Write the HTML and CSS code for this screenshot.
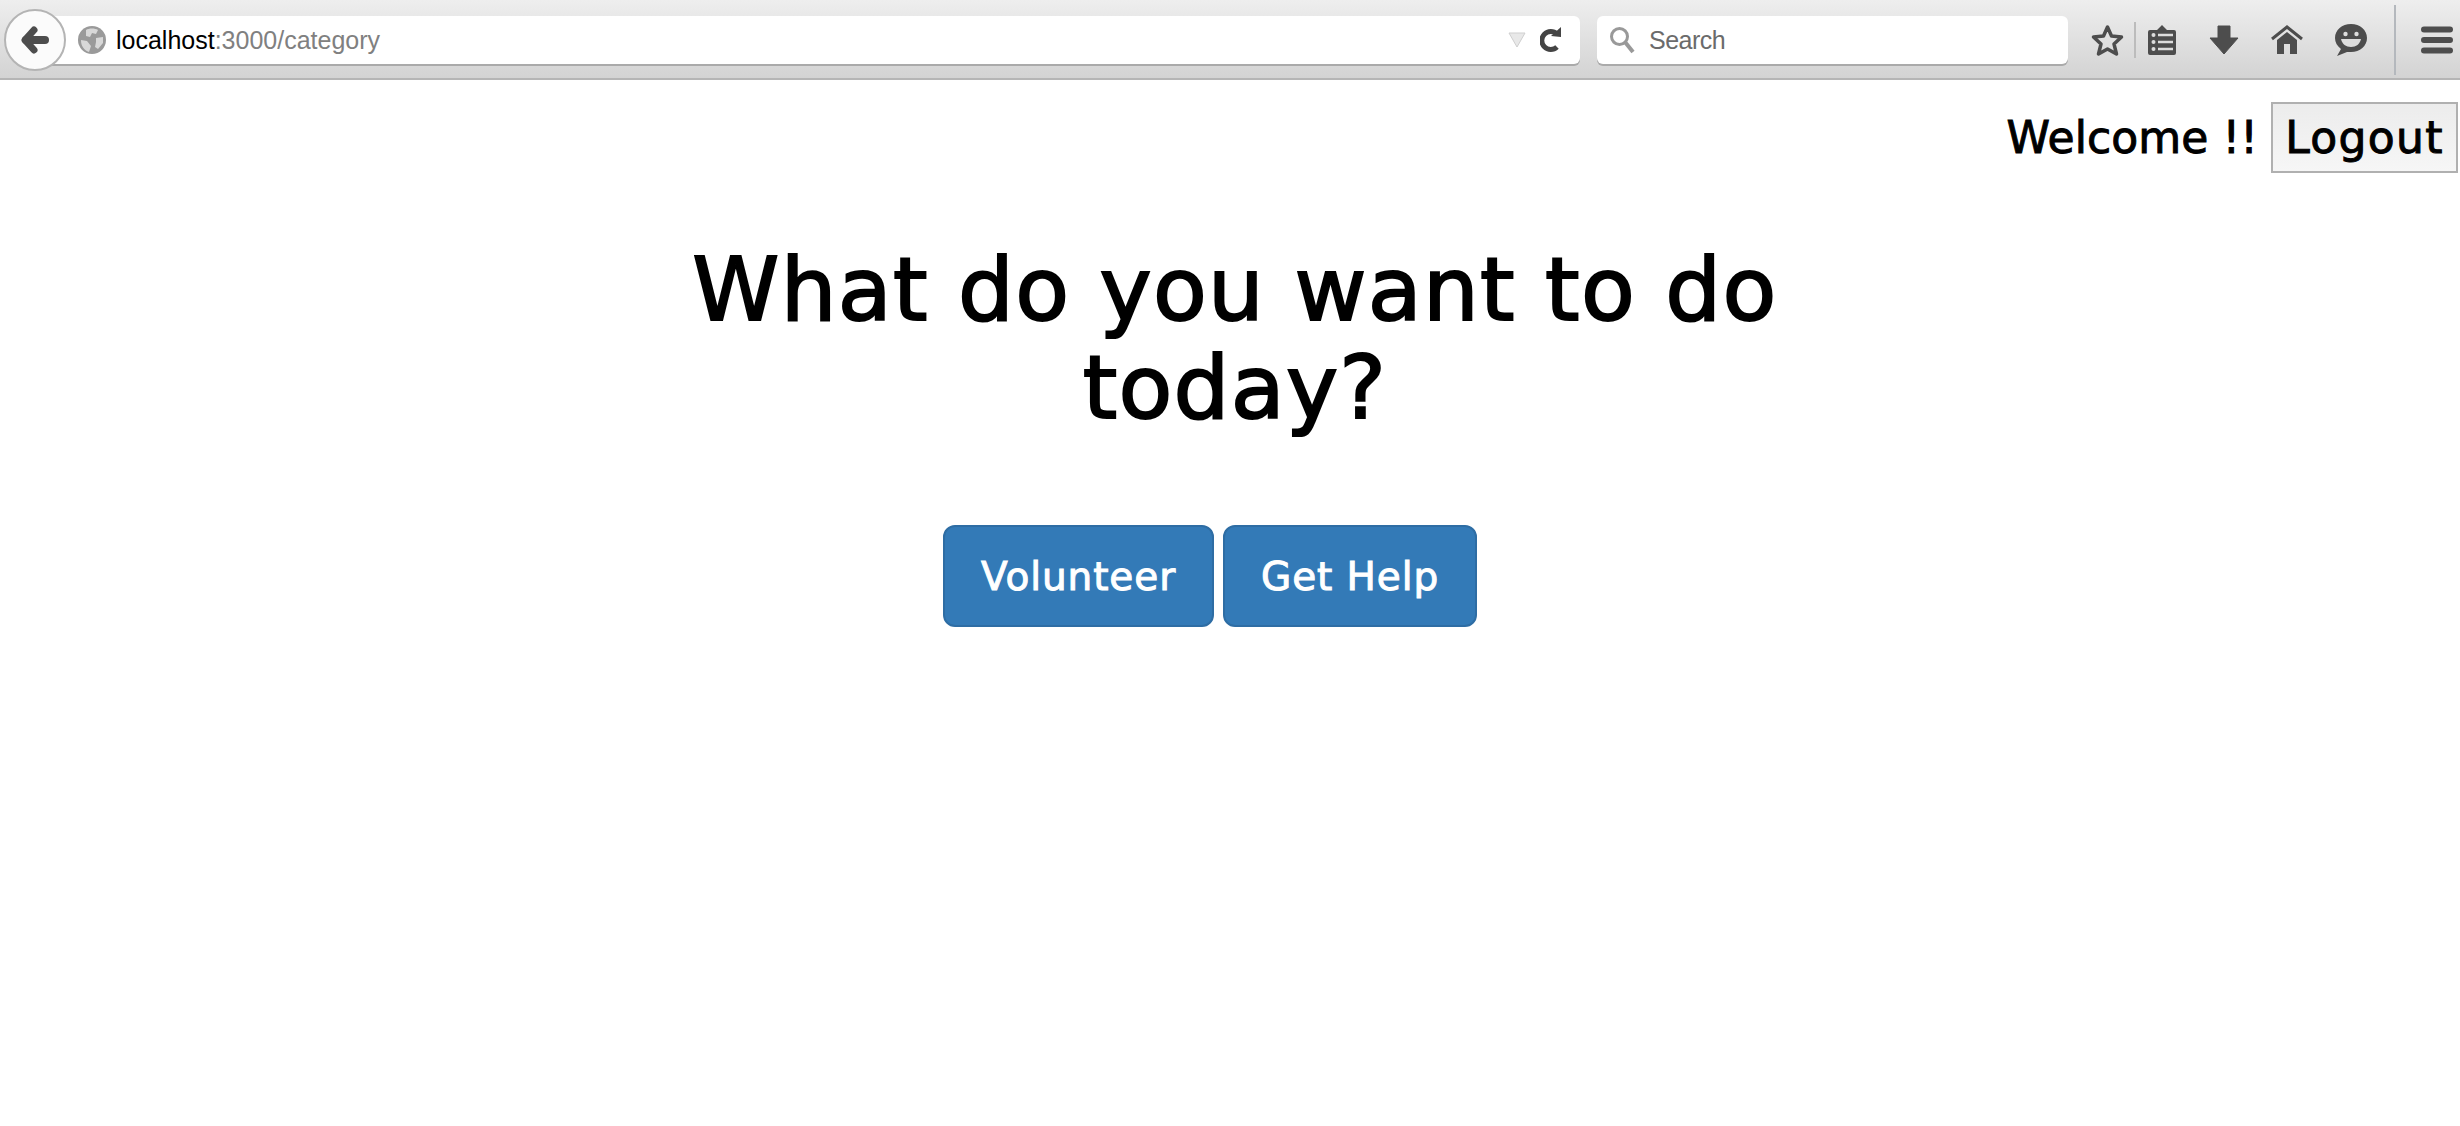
FILE: index.html
```html
<!DOCTYPE html>
<html lang="en">
<head>
<meta charset="utf-8">
<title>localhost:3000/category</title>
<link rel="stylesheet" href="styles.css">
</head>
<body>
<div class="toolbar">
  <button class="back" aria-label="Back">
    <svg width="30" height="30" viewBox="0 0 30 30"><path d="M14 5 L5 15 L14 25" fill="none" stroke="#4d4d4d" stroke-width="7" stroke-linecap="round" stroke-linejoin="round"/><path d="M6 15 H25" stroke="#4d4d4d" stroke-width="8" stroke-linecap="round"/></svg>
  </button>
  <div class="urlbar">
    <svg class="globe" width="28" height="28" viewBox="0 0 28 28"><circle cx="14" cy="14" r="14" fill="#9a9a9a"/><path d="M8 4 C11 2 17 2 20 4 L18 8 L14 7 L12 11 L8 10 Z M18 12 L25 11 L25 17 L20 23 L17 21 L18 16 Z M3 14 L9 15 L13 20 L11 26 C6 24 3 20 3 14 Z" fill="#d8d8d8"/></svg>
    <span class="url"><span class="url-host">localhost</span>:3000/category</span>
    <svg class="dropmark" width="18" height="16" viewBox="0 0 18 16"><path d="M1 1 H17 L9 15 Z" fill="#e8e8e8" stroke="#cfcfcf" stroke-width="1"/></svg>
    <svg class="reload" width="22" height="26" viewBox="0 0 22 26"><path d="M17 7 A9 9 0 1 0 17 20" fill="none" stroke="#444" stroke-width="5"/><path d="M11 9 L21 0 V10 Z" fill="#444"/></svg>
  </div>
  <div class="searchbar">
    <svg width="26" height="28" viewBox="0 0 26 28"><circle cx="10.500" cy="10.500" r="8" fill="none" stroke="#999" stroke-width="3"/><path d="M16 16 L24 26" stroke="#999" stroke-width="4"/></svg>
    <span class="search-label">Search</span>
  </div>
  <div class="tools">
    <svg class="tool star" width="33" height="33" viewBox="0 0 33 33"><path d="M16.500 3 L20.500 12 L30.500 13 L23 20 L25.500 30 L16.500 25 L7.500 30 L10 20 L2.500 13 L12.500 12 Z" fill="none" stroke="#4d4d4d" stroke-width="3.500" stroke-linejoin="round"/></svg>
    <span class="sep"></span>
    <svg class="tool list" width="30" height="32" viewBox="0 0 30 32"><path d="M3 6 H10 L15 1 L20 6 H27 Q29 6 29 8 V29 Q29 31 27 31 H3 Q1 31 1 29 V8 Q1 6 3 6 Z" fill="#4d4d4d"/><path d="M11 11 H26 M11 18 H26 M11 25 H26" stroke="#ddd" stroke-width="2.500"/><circle cx="6.500" cy="11" r="2" fill="#ddd"/><circle cx="6.500" cy="18" r="2" fill="#ddd"/><circle cx="6.500" cy="25" r="2" fill="#ddd"/></svg>
    <svg class="tool down" width="30" height="30" viewBox="0 0 30 30"><path d="M9 1 H21 V13 H29 L15 29 L1 13 H9 Z" fill="#4d4d4d" stroke="#4d4d4d" stroke-linejoin="round"/></svg>
    <svg class="tool home" width="32" height="30" viewBox="0 0 32 30"><path d="M1 14 L16 2 L31 14" fill="none" stroke="#4d4d4d" stroke-width="3"/><path d="M6 15 L16 7 L26 15 V29 H19 V19 H13 V29 H6 Z" fill="#4d4d4d"/></svg>
    <svg class="tool hello" width="34" height="34" viewBox="0 0 34 34"><path d="M17 1 C26 1 33 7 33 15 C33 23 26 29 17 29 C15 29 14 29 13 29 L3 33 L7 26 C3 23 1 19 1 15 C1 7 8 1 17 1 Z" fill="#4d4d4d"/><circle cx="11.500" cy="11" r="2.200" fill="#ddd"/><circle cx="22.500" cy="11" r="2.200" fill="#ddd"/><path d="M7 16 H27 C26 21 22 24 17 24 C12 24 8 21 7 16 Z" fill="#ddd"/></svg>
    <span class="sep sep-tall"></span>
    <svg class="tool menu" width="32" height="28" viewBox="0 0 32 28"><path d="M3 3.500 H29 M3 14 H29 M3 24.500 H29" stroke="#4d4d4d" stroke-width="6" stroke-linecap="round"/></svg>
  </div>
</div>
<div class="userbar">
  <span class="welcome">Welcome !!</span>
  <button class="logout">Logout</button>
</div>
<h1 class="title">What do you want to do<br>today?</h1>
<div class="actions">
  <button class="primary">Volunteer</button>
  <button class="primary">Get Help</button>
</div>
</body>
</html>
```
FILE: styles.css
```css
* { box-sizing: border-box; }
html, body { margin: 0; height: 100%; background: #fff; overflow: hidden; }
body { font-family: "DejaVu Sans", sans-serif; color: #000; }

.toolbar {
  display: flex;
  align-items: center;
  height: 80px;
  padding: 2px 0 0 4px;
  background: linear-gradient(#eeeeee, #d3d3d3);
  border-bottom: 2px solid #b5b5b5;
}
.back {
  position: relative;
  z-index: 1;
  flex: none;
  display: flex;
  align-items: center;
  justify-content: center;
  width: 62px;
  height: 62px;
  padding: 0;
  border: 2px solid #b4b4b4;
  border-radius: 50%;
  background: #fbfbfb;
}
.urlbar, .searchbar {
  display: flex;
  align-items: center;
  height: 48px;
  background: #fff;
  border-radius: 0 6px 6px 0;
  box-shadow: 0 2px 0 #aaa;
  font-family: "Liberation Sans", Arial, sans-serif;
  font-size: 25px;
}
.urlbar {
  width: 1530px;
  margin-left: -16px;
  padding-left: 28px;
}
.globe { flex: none; }
.url { margin-left: 10px; color: #808080; }
.url-host { color: #000; }
.dropmark { margin-left: auto; }
.reload { margin: 0 18px 0 14px; }
.searchbar {
  width: 471px;
  margin-left: 17px;
  padding-left: 12px;
  border-radius: 6px;
}
.search-label { margin-left: 14px; color: #6b6b6b; letter-spacing: -0.5px; }
.tools {
  display: flex;
  align-items: center;
  height: 100%;
  margin-left: 23px;
}
.tool { flex: none; }
.sep { width: 2px; height: 36px; margin: 0 11px 0 10px; background: #bcbcbc; }
.down { margin-left: 32px; }
.home { margin-left: 32px; }
.hello { margin-left: 31px; }
.sep-tall { height: 70px; margin: 0 25px 0 26px; background: #b4b8bd; }

.userbar {
  display: flex;
  align-items: center;
  justify-content: flex-end;
  gap: 13px;
  padding: 22px 2px 0 0;
}
.welcome { font-size: 44px; letter-spacing: 0.1px; -webkit-text-stroke: 1px #000; }
.logout {
  height: 71px;
  width: 187px;
  padding: 0;
  border: 2px solid #b0b0b0;
  background: linear-gradient(#ececec, #f6f6f6);
  font: 44px "DejaVu Sans", sans-serif;
  letter-spacing: 1.3px;
  -webkit-text-stroke: 1px #000;
  color: #000;
}
.title {
  margin: 68px 0 0;
  padding-left: 10px;
  text-align: center;
  font-size: 88px;
  line-height: 98px;
  font-weight: 400;
  letter-spacing: 1.3px;
  -webkit-text-stroke: 2px #000;
}
.actions {
  display: flex;
  justify-content: center;
  gap: 9px;
  margin-top: 88px;
  padding-right: 40px;
}
.primary {
  height: 102px;
  padding: 0 36px;
  border: 2px solid #2e6da4;
  border-radius: 12px;
  background: #337ab7;
  color: #fff;
  font: 39px "DejaVu Sans", sans-serif;
  letter-spacing: 0.9px;
  -webkit-text-stroke: 1px #fff;
}
```
